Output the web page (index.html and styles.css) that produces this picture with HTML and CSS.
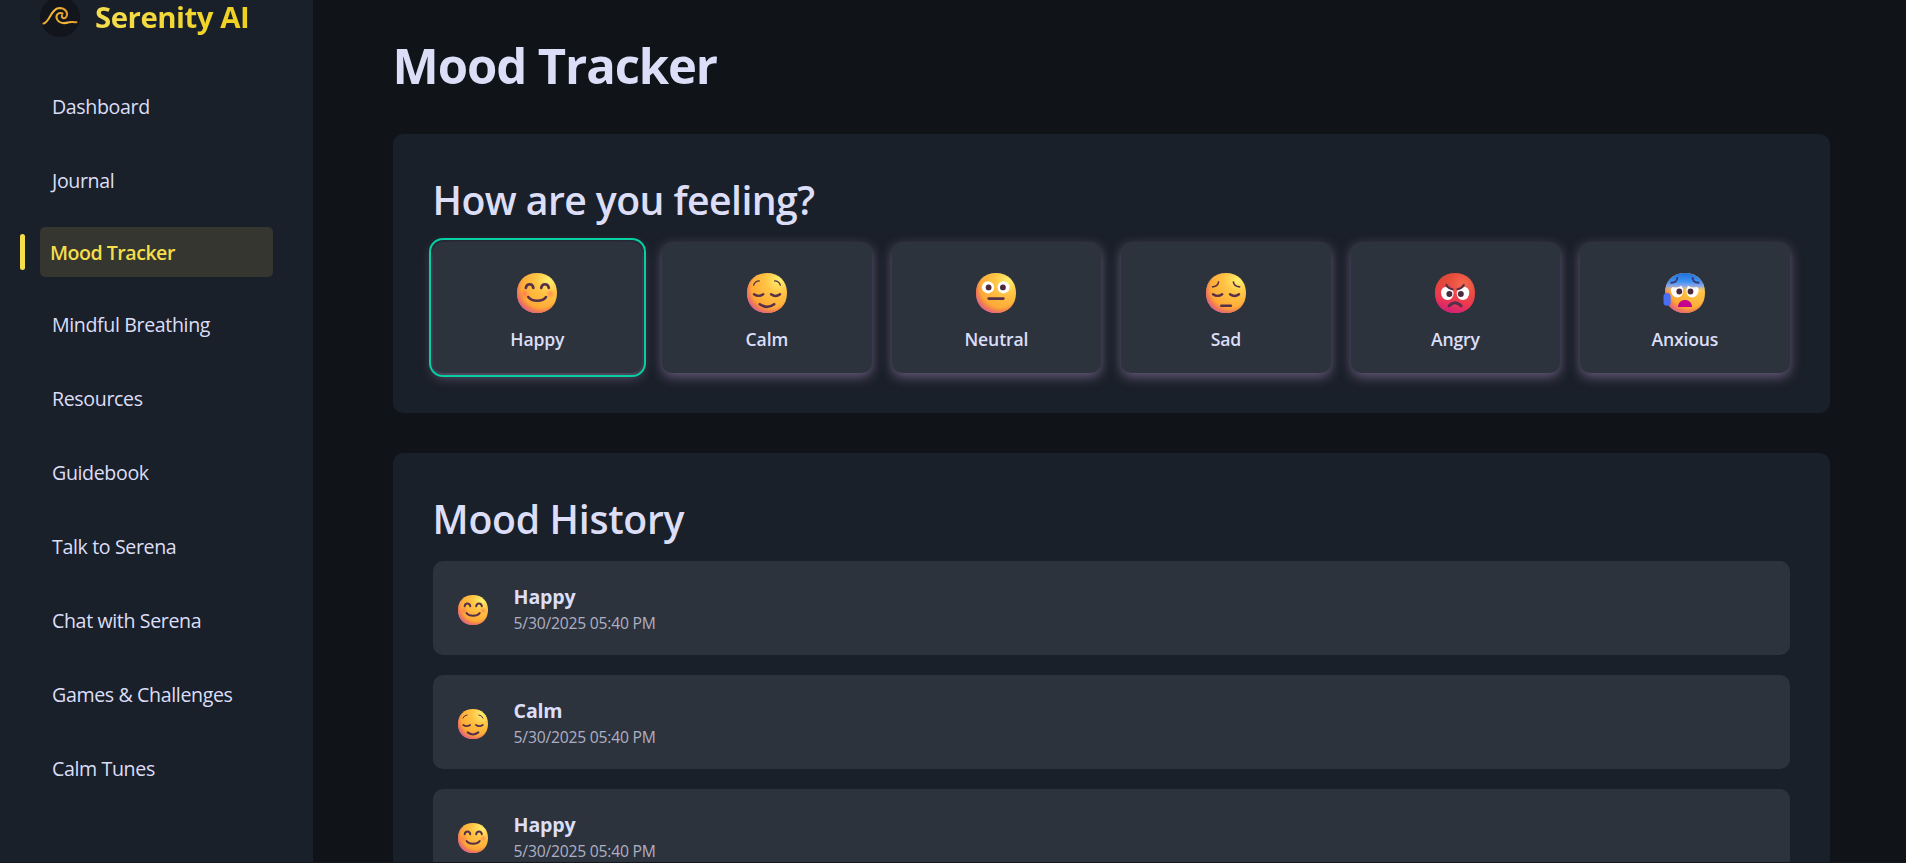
FILE: index.html
```html
<!DOCTYPE html>
<html lang="en">
<head>
<meta charset="utf-8">
<title>Serenity AI</title>
<link rel="stylesheet" href="styles.css">
</head>
<body>
<svg class="defs" width="0" height="0" aria-hidden="true">
  <defs>
    <radialGradient id="skin" cx="0.8" cy="0.18" r="0.95">
      <stop offset="0" stop-color="#fff06e"/><stop offset="0.35" stop-color="#ffc445"/>
      <stop offset="0.8" stop-color="#ffa835"/><stop offset="1" stop-color="#f58a40"/>
    </radialGradient>
    <radialGradient id="lower" cx="0.6" cy="0.38" r="0.66">
      <stop offset="0.72" stop-color="#f07858" stop-opacity="0"/><stop offset="0.9" stop-color="#ea6c62" stop-opacity="0.75"/><stop offset="1" stop-color="#d8609c" stop-opacity="0.95"/>
    </radialGradient>
    <radialGradient id="cheek"><stop offset="0" stop-color="#ff6a5c" stop-opacity="0.6"/><stop offset="1" stop-color="#ff6a5c" stop-opacity="0"/></radialGradient>
    <radialGradient id="rage" cx="0.7" cy="0.3" r="0.8">
      <stop offset="0" stop-color="#f7694f"/><stop offset="0.45" stop-color="#e64c3c"/><stop offset="1" stop-color="#d8402e"/>
    </radialGradient>
    <linearGradient id="rageLow" x1="0.6" y1="0.3" x2="0.4" y2="1">
      <stop offset="0" stop-color="#ff3f5a" stop-opacity="0"/><stop offset="0.55" stop-color="#f23556" stop-opacity="0.8"/><stop offset="1" stop-color="#cf1f78"/>
    </linearGradient>
    <linearGradient id="cold" x1="0" y1="0" x2="0" y2="1">
      <stop offset="0" stop-color="#2070dc"/><stop offset="0.22" stop-color="#3f93f2"/><stop offset="0.33" stop-color="#8fa6e6"/>
      <stop offset="0.48" stop-color="#ffcf55" stop-opacity="0"/>
    </linearGradient>
    <linearGradient id="gold" x1="0" y1="0" x2="1" y2="0">
      <stop offset="0" stop-color="#e8a82e"/><stop offset="0.5" stop-color="#f7bb3b"/><stop offset="1" stop-color="#e39a2c"/>
    </linearGradient>
    <symbol id="face" viewBox="0 0 40 40">
      <path d="M20 0C32 0 40 8 40 20S32 40 20 40 0 32 0 20 8 0 20 0z" fill="url(#skin)"/>
      <path d="M20 0C32 0 40 8 40 20S32 40 20 40 0 32 0 20 8 0 20 0z" fill="url(#lower)"/>
    </symbol>
    <symbol id="happy" viewBox="0 0 40 40">
      <use href="#face" width="40" height="40"/>
      <circle cx="7.5" cy="21" r="5.5" fill="url(#cheek)"/><circle cx="33.5" cy="20.5" r="4.5" fill="url(#cheek)"/>
      <g class="line" stroke-width="2.6"><path d="M8.8 15C9.5 10 15.7 10 16.4 15M24.2 15C24.9 10 31.1 10 31.8 15M11.3 24C15 29 25.5 29 29 24"/></g>
    </symbol>
    <symbol id="calm" viewBox="0 0 40 40">
      <use href="#face" width="40" height="40"/>
      <g class="line"><path stroke-width="1.3" d="M6.6 12.2Q8 8 12.3 7.9M27.6 7.9Q32 8 33.4 12.2"/>
      <path stroke-width="2.4" d="M7 21.3Q11.6 24.5 16.2 21.3M24 21.3Q28.6 24.5 33 21.3"/>
      <path stroke-width="2.6" d="M12.8 31.2Q20 36.6 27.2 31.2"/></g>
    </symbol>
    <symbol id="neutral" viewBox="0 0 40 40">
      <use href="#face" width="40" height="40"/>
      <circle cx="12" cy="14.3" r="6.1" fill="#fff"/><circle cx="27.5" cy="14.3" r="6.1" fill="#fff"/>
      <circle cx="12.6" cy="14.4" r="2.9" fill="#4c2a3c"/><circle cx="26.9" cy="14.4" r="2.9" fill="#4c2a3c"/>
      <path class="line" stroke-width="2.8" d="M12.8 25.6H27.3"/>
    </symbol>
    <symbol id="sad" viewBox="0 0 40 40">
      <use href="#face" width="40" height="40"/>
      <g class="line"><path stroke-width="1.7" d="M6.6 13.8Q12 13.4 12.5 9M27.4 9Q28 13.4 33.6 13.8"/>
      <path stroke-width="2.4" d="M7 21.3Q11.6 24.5 16.2 21.3M24 21.3Q28.6 24.5 33 21.3"/>
      <path stroke-width="2.6" d="M15.3 32.7H24.8"/></g>
    </symbol>
    <symbol id="angry" viewBox="0 0 40 40">
      <path d="M20 0C32 0 40 8 40 20S32 40 20 40 0 32 0 20 8 0 20 0z" fill="url(#rage)"/>
      <path d="M20 0C32 0 40 8 40 20S32 40 20 40 0 32 0 20 8 0 20 0z" fill="url(#rageLow)"/>
      <path d="M6 19Q7 14 11 14L18 17.5Q19 20 18.4 22Q17 27 12.3 27Q6 26 6 19zM34.3 19Q33.3 14 29.3 14L22.3 17.5Q21.3 20 21.9 22Q23.3 27 28 27Q34.3 26 34.3 19z" fill="#fff"/>
      <circle cx="14.4" cy="21" r="3" fill="#4c2a3c"/><circle cx="25.8" cy="21" r="3" fill="#4c2a3c"/>
      <g class="line"><path stroke-width="2.1" d="M11.3 11.8Q13.5 15.8 17.6 16.2M28.8 11.8Q26.6 15.8 22.5 16.2"/>
      <path stroke-width="2.8" d="M14 33Q20 26.5 26.2 33"/></g>
    </symbol>
    <symbol id="anxious" viewBox="-2 0 42 40">
      <use href="#face" width="40" height="40"/>
      <path d="M20 0C32 0 40 8 40 20S32 40 20 40 0 32 0 20 8 0 20 0z" fill="url(#cold)"/>
      <path d="M5.8 17Q6 14.5 8 14Q13 15.500 16.500 12.800Q18.300 15.500 18 18.500Q17.500 24.400 12 24.400Q6.500 24 5.800 17zM33.700 17Q33.500 14.500 31.500 14Q26.500 15.500 23 12.800Q21.200 15.500 21.500 18.500Q22 24.400 27.500 24.400Q33 24 33.700 17z" fill="#fff"/>
      <circle cx="14.3" cy="18.5" r="2.9" fill="#4c2a3c"/><circle cx="25.5" cy="18.5" r="2.9" fill="#4c2a3c"/>
      <path class="brow" stroke-width="1.9" d="M6.3 9.7Q11.8 9.7 12.3 5M27.6 5Q28.1 9.7 33.6 9.7"/>
      <path d="M13 34C13 24.700 27 24.700 27 34z" fill="#c4008e"/>
      <rect x="-1.5" y="20" width="7.2" height="12.7" rx="3.5" fill="#4a6ef2"/>
    </symbol>
  </defs>
</svg>
<div class="app">
  <aside class="sidebar">
    <div class="brand">
      <svg class="logo" viewBox="0 0 40 40"><circle cx="20" cy="20" r="20" fill="#12151b"/>
        <g fill="none" stroke="url(#gold)" stroke-width="2" stroke-linecap="round"><path d="M3.500 26.500C9.500 25.500 11 11.200 19.500 11C25 11 28.500 15.500 26.500 19.500C25 22.300 21 21.500 22 18.500"/>
        <path d="M22.500 16.500C18 14.500 15 19 17.300 22.800C20.500 27.500 25 26.500 29 25.300C32 24.300 33.500 25.500 36.500 25.200"/></g></svg>
      <span class="brand-name">Serenity AI</span>
    </div>
    <nav class="nav">
      <a class="nav-item">Dashboard</a>
      <a class="nav-item">Journal</a>
      <a class="nav-item active">Mood Tracker</a>
      <a class="nav-item">Mindful Breathing</a>
      <a class="nav-item">Resources</a>
      <a class="nav-item">Guidebook</a>
      <a class="nav-item">Talk to Serena</a>
      <a class="nav-item">Chat with Serena</a>
      <a class="nav-item">Games &amp; Challenges</a>
      <a class="nav-item">Calm Tunes</a>
    </nav>
  </aside>
  <main class="main">
    <h1 class="title">Mood Tracker</h1>
    <section class="card">
      <h2 class="heading ask">How are you feeling?</h2>
      <div class="moods">
        <button class="mood selected"><svg class="emoji"><use href="#happy"/></svg><span>Happy</span></button>
        <button class="mood"><svg class="emoji"><use href="#calm"/></svg><span>Calm</span></button>
        <button class="mood"><svg class="emoji"><use href="#neutral"/></svg><span>Neutral</span></button>
        <button class="mood"><svg class="emoji"><use href="#sad"/></svg><span>Sad</span></button>
        <button class="mood"><svg class="emoji"><use href="#angry"/></svg><span>Angry</span></button>
        <button class="mood"><svg class="emoji wide"><use href="#anxious"/></svg><span>Anxious</span></button>
      </div>
    </section>
    <section class="card">
      <h2 class="heading">Mood History</h2>
      <div class="history">
        <article class="entry"><svg class="emoji small"><use href="#happy"/></svg><div><div class="name">Happy</div><div class="date">5/30/2025 05:40 PM</div></div></article>
        <article class="entry"><svg class="emoji small"><use href="#calm"/></svg><div><div class="name">Calm</div><div class="date">5/30/2025 05:40 PM</div></div></article>
        <article class="entry"><svg class="emoji small"><use href="#happy"/></svg><div><div class="name">Happy</div><div class="date">5/30/2025 05:40 PM</div></div></article>
      </div>
    </section>
  </main>
</div>
</body>
</html>
```
FILE: styles.css
```css
* { box-sizing: border-box; }
body {
  margin: 0;
  height: 863px;
  overflow: hidden;
  background: #101317;
  color: #dcdef8;
  font-family: "Open Sans", "Noto Sans", sans-serif;
}
.defs { position: absolute; }
.app { display: flex; height: 863px; overflow: hidden; border-bottom: 1px solid #14171d; }
.sidebar { width: 313px; flex: none; background: #1a2029; padding: 0 40px; }
.brand { display: flex; align-items: center; gap: 15px; height: 40px; margin-top: -3px; }
.logo { width: 40px; height: 40px; }
.brand-name {
  font-size: 29.4px; font-weight: 700; line-height: 34px; padding-bottom: 1px; letter-spacing: -0.5px;
  background: linear-gradient(90deg, #f5de50, #efd11c);
  -webkit-background-clip: text; background-clip: text; color: transparent;
}
.nav { display: flex; flex-direction: column; gap: 20px; margin-top: 42px; }
.nav-item { position: relative; height: 54px; padding: 0 12px; line-height: 56px; font-size: 19.6px; letter-spacing: -0.37px; white-space: nowrap; }
.nav-item.active { height: 50px; padding: 0 10px; line-height: 52px; border-radius: 5px; background: #34362f; color: #f5de4c; font-weight: 600; letter-spacing: -0.5px; }
.nav-item.active::before { content: ""; position: absolute; left: -20px; top: 7px; width: 5px; height: 36px; border-radius: 3px; background: #f5de4c; }
.main { flex: 1; padding: 31px 76.4px 0 79.6px; }
.title { margin: 0 0 35px; font-size: 49px; line-height: 68px; font-weight: 700; letter-spacing: -1.1px; }
.card { background: #1a2029; border-radius: 10px; padding: 39px 40px 40px; margin-bottom: 40px; }
.heading { margin: 0 0 16px; font-size: 39.2px; line-height: 53px; font-weight: 600; letter-spacing: -0.3px; white-space: nowrap; }
.heading.ask { letter-spacing: -0.58px; }
.moods { display: grid; grid-template-columns: repeat(6, 1fr); gap: 20px; }
.mood {
  display: flex; flex-direction: column; align-items: center; gap: 13px;
  height: 131px; padding: 31px 0 0; border: 0; border-radius: 10px;
  background: #2d333d; color: inherit; font: 600 17.6px/26px "Open Sans", "Noto Sans", sans-serif;
  letter-spacing: -0.15px;
  box-shadow: 0 4px 12px rgba(135, 115, 158, 0.68);
}
.mood.selected { outline: 2px solid #06cfa2; outline-offset: 2px; }
.emoji { width: 40px; height: 40px; flex: none; overflow: visible; }
.emoji.wide { width: 42px; margin-left: -2px; }
.emoji.small { width: 30px; height: 30px; margin-top: 3px; }
.line { fill: none; stroke: #56304a; stroke-linecap: round; }
.brow { fill: none; stroke: #3b3570; stroke-linecap: round; }
.history { display: flex; flex-direction: column; gap: 20px; }
.entry { display: flex; align-items: center; gap: 26px; height: 94px; padding: 0 25px; border-radius: 10px; background: #2d333d; }
.name { font-size: 19.6px; line-height: 27px; font-weight: 700; letter-spacing: -0.2px; }
.date { margin-top: 2px; font-size: 15.7px; line-height: 22px; letter-spacing: -0.22px; color: #adafc2; }
```
